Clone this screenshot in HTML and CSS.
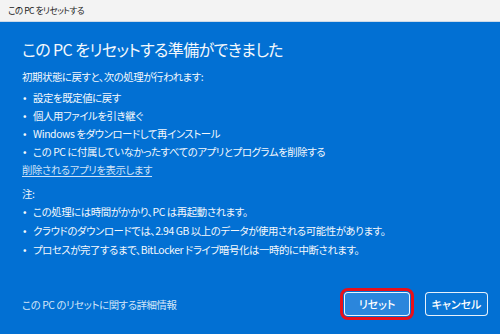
FILE: index.html
```html
<!DOCTYPE html>
<html lang="ja">

<head>
    <meta charset="UTF-8" />
    <meta name="viewport" content="width=device-width, initial-scale=1.0" />
    <title>この PC をリセットする</title>

    <link rel="stylesheet" href="styles.css">
</head>

<body>
    <div class="titlebar">この PC をリセットする</div>

    <div class="dialog">
        <h1>この PC をリセットする準備ができました</h1>

        <p class="intro">初期状態に戻すと、次の処理が行われます:</p>
        <ul class="list">
            <li>設定を既定値に戻す</li>
            <li>個人用ファイルを引き継ぐ</li>
            <li>Windows をダウンロードして再インストール</li>
            <li>この PC に付属していなかったすべてのアプリとプログラムを削除する</li>
        </ul>
        <a class="link" href="#">削除されるアプリを表示します</a>

        <p class="note">注:</p>
        <ul class="list notes">
            <li>この処理には時間がかかり、PC は再起動されます。</li>
            <li>クラウドのダウンロードでは、2.94 GB 以上のデータが使用される可能性があります。</li>
            <li>プロセスが完了するまで、BitLocker ドライブ暗号化は一時的に中断されます。</li>
        </ul>

        <div class="footer">
            <span class="more">この PC のリセットに関する詳細情報</span>
            <div class="buttons">
                <button class="btn primary">リセット</button>
                <button class="btn">キャンセル</button>
            </div>
        </div>
    </div>
</body>

</html>
```

FILE: styles.css
```css
body {
    margin: 0;
    width: 500px;
    height: 334px;
    overflow: hidden;
    font-family: "Noto Sans CJK JP", "Noto Sans", sans-serif;
    font-feature-settings: "palt";
    font-size: 10.4px;
    letter-spacing: -0.4px;
}

.titlebar {
    height: 21px;
    line-height: 21px;
    padding-left: 8px;
    background-color: #f3f3f3;
    border-bottom: 1px solid #cbd9e8;
    color: #1b1b1b;
    font-size: 8.6px;
    letter-spacing: -0.5px;
}

.dialog {
    display: flex;
    flex-direction: column;
    height: 312px;
    box-sizing: border-box;
    padding: 16px 12px 18px 22px;
    background-color: #0270d3;
    color: #f4f8fc;
}

h1 {
    margin: 0 0 8px;
    font-size: 16px;
    font-weight: 400;
    line-height: 22px;
    letter-spacing: -0.6px;
}

p {
    margin: 0;
    line-height: 18px;
}

.intro {
    margin-bottom: 3px;
}

.list {
    margin: 0;
    padding: 0;
    list-style: none;
}

.list li {
    line-height: 18px;
    padding-left: 11px;
    position: relative;
}

.list li::before {
    content: "•";
    position: absolute;
    left: 1px;
}

.notes li {
    line-height: 18.8px;
}

.link {
    color: #cfe2f7;
    line-height: 18px;
    text-decoration: underline;
    text-underline-offset: 2px;
}

.note {
    margin-top: 6px;
}

.footer {
    margin-top: auto;
    display: flex;
    align-items: center;
    justify-content: space-between;
}

.more {
    color: #d3e5f8;
}

.buttons {
    display: flex;
    gap: 15px;
}

.btn {
    height: 24px;
    padding: 0;
    width: 63px;
    border: 1.5px solid rgba(255, 255, 255, 0.9);
    border-radius: 4px;
    background-color: #0a76d6;
    color: #ffffff;
    font-family: inherit;
    font-feature-settings: "palt";
    font-size: 11px;
    font-weight: 500;
    letter-spacing: 0;
}

.primary {
    width: 66px;
    background-color: #2b86dc;
    outline: 3px solid #e8101a;
    outline-offset: 1px;
}
```
